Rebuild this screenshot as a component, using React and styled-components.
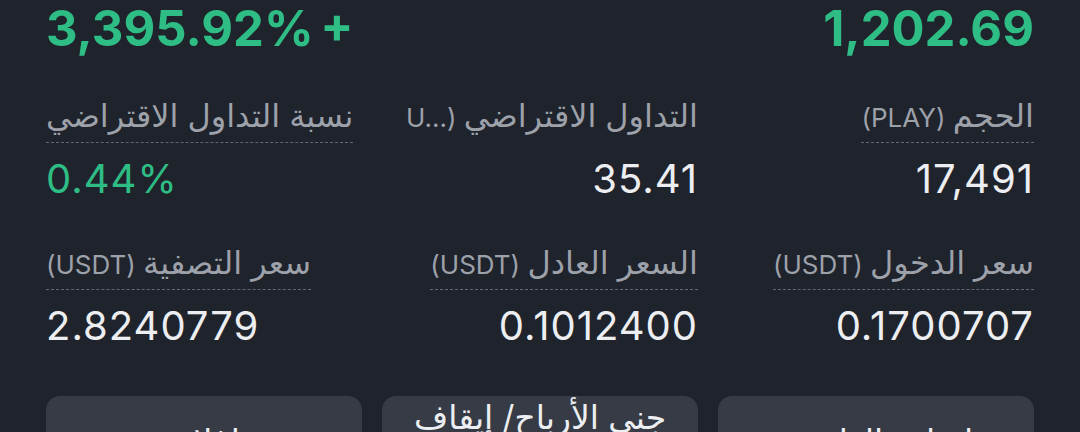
import React from "react"
import styled, {createGlobalStyle} from "styled-components"

const GlobalStyle = createGlobalStyle`
    html, body {
        margin: 0;
        padding: 0;
        background: #1f232c;
        overflow: hidden;
    }
    body {
        font-family: "Inter", "DejaVu Sans", sans-serif;
    }
`

const Page = styled.div`
    direction: rtl;
    height: 432px;
    overflow: hidden;
    padding: 0 46px;
    background: #1f232c;
    color: #eceef1;
`

const Grid = styled.div`
    display: grid;
    grid-template-columns: repeat(3, 1fr);
    column-gap: 20px;
    row-gap: 44px;
`

const Cell = styled.div`
    display: flex;
    flex-direction: column;
    min-width: 0;
    align-items: ${props => props.$end ? "flex-end" : "flex-start"};
`

const BigValue = styled.div`
    font-size: 49px;
    font-weight: 700;
    line-height: 50px;
    padding-top: 4px;
    color: #2ebd85;
    white-space: nowrap;
    word-spacing: -5px;
    span {
        direction: ltr;
        unicode-bidi: isolate;
    }
`

const Label = styled.div`
    font-size: 26px;
    line-height: 36px;
    color: #9da1aa;
    padding-bottom: 6px;
    white-space: nowrap;
    border-bottom: 1px dashed ${props => props.$plain ? "transparent" : "#626771"};
`

// the arabic fallback font draws small, so the arabic words get their own size
const Ar = styled.span`
    font-size: 32px;
    line-height: 36px;
`

// cut off unit, kept left-to-right so the dots sit after the letter
const Cut = styled.span`
    direction: ltr;
    unicode-bidi: isolate;
`

const Value = styled.div`
    font-size: 40px;
    line-height: 44px;
    margin-top: 14px;
    color: ${props => props.$green ? "#2ebd85" : "#eceef1"};
    direction: ltr;
    unicode-bidi: isolate;
    letter-spacing: 1px;
`

const Buttons = styled.div`
    display: grid;
    grid-template-columns: repeat(3, 1fr);
    column-gap: 20px;
    margin-top: 48px;
`

const Button = styled.div`
    height: 90px;
    border-radius: 14px;
    background: #363b46;
    display: flex;
    align-items: center;
    justify-content: center;
    text-align: center;
    font-size: 33px;
    line-height: 36px;
    color: #eceef1;
`

const TwoLineButton = styled(Button)`
    align-items: flex-start;
    padding-top: 3px;
`

const stats = [
    {ar: "الحجم", unit: "(PLAY)", value: "17,491"},
    {ar: "التداول الاقتراضي", cut: "U...", value: "35.41", plain: true},
    {ar: "نسبة التداول الاقتراضي", value: "0.44%", green: true, end: true},
    {ar: "سعر الدخول", unit: "(USDT)", value: "0.1700707"},
    {ar: "السعر العادل", unit: "(USDT)", value: "0.1012400"},
    {ar: "سعر التصفية", unit: "(USDT)", value: "2.8240779", end: true},
]

export default function App() {
    return (
        <Page>
            <GlobalStyle/>
            <Grid>
                <Cell>
                    <BigValue><span>1,202.69</span></BigValue>
                </Cell>
                <Cell/>
                <Cell $end>
                    <BigValue><span>3,395.92% +</span></BigValue>
                </Cell>
                {
                    stats.map(item => (
                        <Cell key={item.ar} $end={item.end}>
                            <Label $plain={item.plain}>
                                <Ar>{item.ar}</Ar>
                                {item.unit && " " + item.unit}
                                {item.cut && <> (<Cut>{item.cut}</Cut></>}
                            </Label>
                            <Value $green={item.green}>{item.value}</Value>
                        </Cell>
                    ))
                }
            </Grid>
            <Buttons>
                <Button>إضافة الهامش</Button>
                <TwoLineButton>جني الأرباح/ إيقاف<br/>الخسارة</TwoLineButton>
                <Button>إغلاق</Button>
            </Buttons>
        </Page>
    )
}
